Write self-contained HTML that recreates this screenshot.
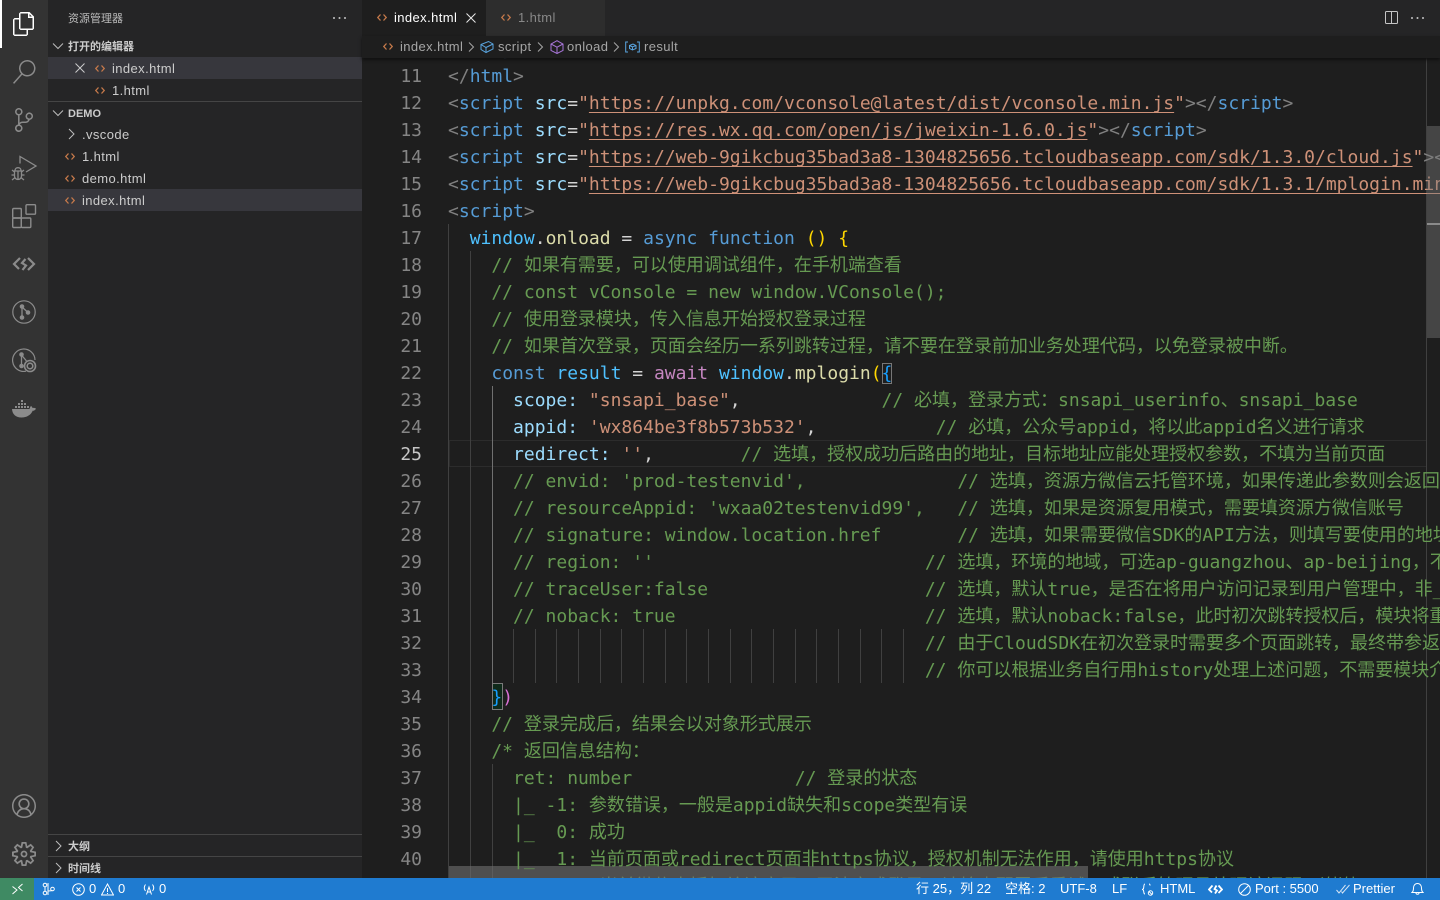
<!DOCTYPE html>
<html lang="zh-CN"><head><meta charset="utf-8"><title>index.html - demo</title>
<style>
*{box-sizing:border-box}
html,body{margin:0;padding:0;width:1440px;height:900px;overflow:hidden;background:#1e1e1e}
body{position:relative;font-family:"Liberation Sans","Noto Sans CJK SC",sans-serif;color:#ccc}
.a{position:absolute}
#act{left:0;top:0;width:48px;height:878px;background:#333}
#act svg{position:absolute;fill:#8b8b8b}
#side{left:48px;top:0;width:314px;height:878px;background:#252526}
.row{position:absolute;left:0;width:314px;height:22px;line-height:22px;font-size:13px;color:#ccc;white-space:pre;letter-spacing:.4px}
.row.sel{background:#37373d}
.row span{position:absolute;top:1px}
.hd{position:absolute;font-size:11px;font-weight:700;color:#ccc;line-height:22px;height:22px;white-space:pre}
.div{position:absolute;left:0;width:314px;height:1px;background:#454545}
.ic{position:absolute;fill:none;stroke:#c5794a;stroke-width:1.300}
.chev{position:absolute;fill:none;stroke:#bcbcbc;stroke-width:1}
#tabs{left:362px;top:0;width:1078px;height:36px;background:#252526}
#crumb{left:362px;top:36px;width:1078px;height:22px;background:#1e1e1e;box-shadow:0 2px 3px #101010;z-index:5;font-size:13px;line-height:22px;color:#a6a6a6;letter-spacing:.4px}
#crumb span{position:absolute;top:0;white-space:pre}
#ed{left:362px;top:58px;width:1078px;height:820px;overflow:hidden;background:#1e1e1e}
.ln{position:absolute;left:0;width:60px;text-align:right;font:18px/27px "DejaVu Sans Mono",monospace;color:#858585;margin-top:1px}
.c{position:absolute;left:86px;white-space:pre;font:18px/27px "DejaVu Sans Mono","Noto Sans CJK SC",monospace;color:#d4d4d4;height:27px;width:1200px;margin-top:1px}
.g{color:#808080}.t{color:#569cd6}.at{color:#9cdcfe}.s{color:#ce9178}.u{color:#ce9178;text-decoration:underline;text-decoration-thickness:1px;text-underline-offset:3px;text-decoration-skip-ink:none}
.k{color:#569cd6}.f{color:#dcdcaa}.v{color:#4fc1ff}.p{color:#9cdcfe}.cm{color:#669a52}.aw{color:#c586c0}.y{color:#ffd700}
.ig{position:absolute;width:1px;background:#404040}
#st{left:0;top:878px;width:1440px;height:22px;background:#1f7bd0;font-size:13px;line-height:22px;color:#fff;z-index:6}
#st span{position:absolute;top:0;white-space:pre}
#st svg{position:absolute;fill:none;stroke:#fff;stroke-width:1}
</style></head><body>

<div class="a" id="act">
<div class="a" style="left:0;top:0;width:2px;height:48px;background:#fff"></div>
<svg style="left:12px;top:12px;fill:#fff" width="24" height="24" viewBox="0 0 24 24"><path d="M17.5 0h-9L7 1.5V6H2.5L1 7.5v15.07L2.5 24h12.07L16 22.57V18h4.7l1.3-1.43V4.5L17.5 0zm0 2.12l2.38 2.38H17.5V2.12zm-3 20.38h-12v-15H7v9.07L8.5 18h6v4.5zm6-6h-12v-15H16V6h4.5v10.5z"/></svg>
<svg style="left:12px;top:60px" width="24" height="24" viewBox="0 0 24 24"><path d="M15.25 0a8.25 8.25 0 0 0-6.18 13.72L1 22.88l1.12 1 8.05-9.12A8.251 8.251 0 1 0 15.25.01V0zm0 15a6.75 6.75 0 1 1 0-13.5 6.75 6.75 0 0 1 0 13.5z"/></svg>
<svg style="left:12px;top:108px" width="24" height="24" viewBox="0 0 24 24"><path d="M21.007 8.222A3.738 3.738 0 0 0 15.045 5.2a3.737 3.737 0 0 0 1.156 6.583 2.988 2.988 0 0 1-2.668 1.67h-2.99a4.456 4.456 0 0 0-2.989 1.165V7.4a3.737 3.737 0 1 0-1.494 0v9.117a3.776 3.776 0 1 0 1.816.099 2.99 2.99 0 0 1 2.668-1.667h2.99a4.484 4.484 0 0 0 4.223-3.039 3.736 3.736 0 0 0 3.25-3.687zM4.565 3.738a2.242 2.242 0 1 1 4.484 0 2.242 2.242 0 0 1-4.484 0zm4.484 16.441a2.242 2.242 0 1 1-4.484 0 2.242 2.242 0 0 1 4.484 0zm8.221-9.715a2.242 2.242 0 1 1 0-4.485 2.242 2.242 0 0 1 0 4.485z"/></svg>
<svg style="left:10px;top:155px;fill:none;stroke:#8b8b8b;stroke-width:1.300" width="28" height="28" viewBox="0 0 28 28"><path d="M10 8.500V1.500l16 9.500-10 6"/><path d="M5 15.500c0-1.600 1.200-2.800 3-2.800s3 1.200 3 2.800M4.500 16h7v5c0 2-1.500 3.500-3.500 3.500S4.500 23 4.500 21zM8 16v8.500M2 15l2.500 2M14 15l-2.500 2M1.500 20h3M11.500 20h3M2 25l2.800-2.200M14 25l-2.800-2.200"/></svg>
<svg style="left:12px;top:204px;fill:none;stroke:#8b8b8b;stroke-width:1.400" width="26" height="26" viewBox="0 0 26 26"><rect x=".7" y="4.500" width="8.600" height="9.500" rx="1"/><rect x=".7" y="14" width="8.600" height="9.500" rx="1"/><rect x="9.300" y="14" width="9.500" height="9.500" rx="1"/><rect x="14" y=".7" width="9.500" height="9.500" rx="1"/></svg>
<svg style="left:12px;top:255px;fill:none;stroke:#8b8b8b;stroke-width:2.200" width="24" height="18" viewBox="0 0 24 18"><path d="M8 3 2 9l5 5M16 3l6 6-6 6M13.500 4l-3.500 4 4 2.500-3.500 4.500"/></svg>
<svg style="left:12px;top:300px;fill:none;stroke:#8b8b8b;stroke-width:1.200" width="24" height="24" viewBox="0 0 24 24"><circle cx="12" cy="12" r="11.200"/><path d="M10 7v10M10 7l6 5.500" stroke-width="1.300"/><circle cx="10" cy="6.500" r="1.700" fill="#8b8b8b"/><circle cx="10" cy="17.500" r="1.700" fill="#8b8b8b"/><circle cx="16" cy="12.500" r="1.700" fill="#8b8b8b"/></svg>
<svg style="left:12px;top:348px;fill:none;stroke:#8b8b8b;stroke-width:1.200" width="26" height="26" viewBox="0 0 26 26"><path d="M14 23.200A11.200 11.200 0 1 1 23 12"/><path d="M9.500 7v11M9.500 7l5 6" stroke-width="1.300"/><circle cx="9.500" cy="6.500" r="1.700" fill="#8b8b8b"/><circle cx="9.500" cy="18" r="1.700" fill="#8b8b8b"/><circle cx="18" cy="18" r="5.500" fill="#333" stroke-width="1.600"/><circle cx="18" cy="18" r="2.800" fill="none" stroke-width="1.600"/></svg>
<svg style="left:12px;top:400px" width="24" height="18" viewBox="0 0 24 18"><path d="M9 0h2v2H9zM6 3h2v2H6zM9 3h2v2H9zM12 3h2v2h-2zM3 6h2v2H3zM6 6h2v2H6zM9 6h2v2H9zM12 6h2v2h-2zM15 6h2v2h-2z"/><path d="M0 9h17.500c.5-1.500.8-2.500 1.500-3 .8.500 1.300 1.200 1.500 2 1-.3 2-.2 3.500.6-.7 1.500-2 2.200-3.300 2.200C18.800 15 15 17.500 9.500 17.500 3.500 17.500.3 14 0 9z"/></svg>
<svg style="left:12px;top:794px" width="24" height="24" viewBox="0 0 16 16"><path d="M16 7.992C16 3.58 12.416 0 8 0S0 3.58 0 7.992c0 2.43 1.104 4.62 2.832 6.09.016.016.032.016.032.032.144.112.288.224.448.336.08.048.144.111.224.175A7.98 7.98 0 0 0 8.016 16a7.98 7.98 0 0 0 4.48-1.375c.08-.048.144-.111.224-.16.144-.111.304-.223.448-.335.016-.016.032-.016.032-.032 1.696-1.487 2.8-3.676 2.8-6.106zm-8 7.001c-1.504 0-2.88-.48-4.016-1.279.016-.128.048-.255.08-.383a4.17 4.17 0 0 1 .416-.991c.176-.304.384-.576.64-.816.24-.24.528-.463.816-.639.304-.176.624-.304.976-.4A4.15 4.15 0 0 1 8 10.342a4.185 4.185 0 0 1 2.928 1.166c.368.368.656.8.864 1.295.112.288.192.592.24.911A7.03 7.03 0 0 1 8 14.993zm-2.448-7.4a2.49 2.49 0 0 1-.208-1.024c0-.351.064-.703.208-1.023.144-.32.336-.607.576-.847.24-.24.528-.431.848-.575.32-.144.672-.208 1.024-.208.368 0 .704.064 1.024.208.32.144.608.336.848.575.24.24.432.528.576.847.144.32.208.672.208 1.023 0 .368-.064.704-.208 1.023a2.84 2.84 0 0 1-.576.848 2.84 2.84 0 0 1-.848.575 2.715 2.715 0 0 1-2.064 0 2.84 2.84 0 0 1-.848-.575 2.526 2.526 0 0 1-.56-.848zm7.424 5.306c0-.032-.016-.048-.016-.08a5.22 5.22 0 0 0-.688-1.406 4.883 4.883 0 0 0-1.088-1.135 5.207 5.207 0 0 0-1.04-.608 2.82 2.82 0 0 0 .464-.383 4.2 4.2 0 0 0 .624-.784 3.624 3.624 0 0 0 .528-1.934 3.71 3.71 0 0 0-.288-1.47 3.799 3.799 0 0 0-.816-1.199 3.845 3.845 0 0 0-1.2-.8 3.72 3.72 0 0 0-1.472-.287 3.72 3.72 0 0 0-1.472.288 3.631 3.631 0 0 0-1.2.815 3.84 3.84 0 0 0-.8 1.199 3.71 3.71 0 0 0-.288 1.47c0 .352.048.688.144 1.007.096.336.224.64.4.927.16.288.384.544.624.784.144.144.304.271.48.383a5.12 5.12 0 0 0-1.04.624c-.416.32-.784.703-1.088 1.119a4.999 4.999 0 0 0-.688 1.406c-.016.032-.016.064-.016.08C1.776 11.636.992 9.91.992 7.992.992 4.14 4.144.991 8 .991s7.008 3.149 7.008 7.001a6.96 6.96 0 0 1-2.032 4.907z"/></svg>
<svg style="left:12px;top:842px" width="24" height="24" viewBox="0 0 24 24"><path d="M19.85 8.75l4.15.83v4.84l-4.15.83 2.35 3.52-3.43 3.43-3.52-2.35-.83 4.15H9.58l-.83-4.15-3.52 2.35-3.43-3.43 2.35-3.52L0 14.42V9.58l4.15-.83L1.8 5.23 5.23 1.8l3.52 2.35L9.58 0h4.84l.83 4.15 3.52-2.35 3.43 3.43-2.35 3.52zm-1.57 5.07l4-.81v-2l-4-.81-.54-1.3 2.29-3.43-1.43-1.43-3.43 2.29-1.3-.54-.81-4h-2l-.81 4-1.3.54-3.43-2.29-1.43 1.43L6.38 8.9l-.54 1.3-4 .81v2l4 .81.54 1.3-2.29 3.43 1.43 1.43 3.43-2.29 1.3.54.81 4h2l.81-4 1.3-.54 3.43 2.29 1.43-1.43-2.29-3.43.54-1.3zm-8.186-4.672A3.43 3.43 0 0 1 12 8.57 3.44 3.44 0 0 1 15.43 12a3.43 3.43 0 1 1-5.336-2.852zm.956 4.274c.281.188.612.288.95.288A1.7 1.7 0 0 0 13.71 12a1.71 1.71 0 1 0-2.66 1.422z"/></svg>
</div>

<div class="a" id="side">
<div class="hd" style="left:20px;top:8px;font-weight:400;color:#bbb">资源管理器</div>
<svg class="a" style="left:285px;top:17px;fill:#c5c5c5" width="14" height="3"><circle cx="1" cy="1" r="1"/><circle cx="6.500" cy="1" r="1"/><circle cx="12" cy="1" r="1"/></svg>
<svg class="chev" style="left:4px;top:41px" width="12" height="10"><path d="M1 2.500 6 7.500l5-5"/></svg>
<div class="hd" style="left:20px;top:36px">打开的编辑器</div>
<div class="row sel" style="top:57px"><span style="left:64px">index.html</span></div>
<svg class="ic" style="left:47px;top:65px" width="10" height="7" viewBox="0 0 10 7"><path d="M3.500.500.800 3.500l2.700 3M6.500.500l2.700 3-2.700 3"/></svg>
<svg class="a" style="left:27px;top:63px;fill:none;stroke:#ccc;stroke-width:1" width="10" height="10"><path d="M.5.500l9 9M9.500.500l-9 9"/></svg>
<div class="row" style="top:79px"><span style="left:64px">1.html</span></div>
<svg class="ic" style="left:47px;top:87px" width="10" height="7" viewBox="0 0 10 7"><path d="M3.500.500.800 3.500l2.700 3M6.500.500l2.700 3-2.700 3"/></svg>
<div class="div" style="top:101px"></div>
<svg class="chev" style="left:4px;top:108px" width="12" height="10"><path d="M1 2.500 6 7.500l5-5"/></svg>
<div class="hd" style="left:20px;top:103px">DEMO</div>
<svg class="chev" style="left:19px;top:128px" width="10" height="12"><path d="M2 1l5 5-5 5"/></svg>
<div class="row" style="top:123px"><span style="left:34px">.vscode</span></div>
<div class="row" style="top:145px"><span style="left:34px">1.html</span></div>
<svg class="ic" style="left:17px;top:153px" width="10" height="7" viewBox="0 0 10 7"><path d="M3.500.500.800 3.500l2.700 3M6.500.500l2.700 3-2.700 3"/></svg>
<div class="row" style="top:167px"><span style="left:34px">demo.html</span></div>
<svg class="ic" style="left:17px;top:175px" width="10" height="7" viewBox="0 0 10 7"><path d="M3.500.500.800 3.500l2.700 3M6.500.500l2.700 3-2.700 3"/></svg>
<div class="row sel" style="top:189px"><span style="left:34px">index.html</span></div>
<svg class="ic" style="left:17px;top:197px" width="10" height="7" viewBox="0 0 10 7"><path d="M3.500.500.800 3.500l2.700 3M6.500.500l2.700 3-2.700 3"/></svg>
<div class="div" style="top:834px"></div>
<svg class="chev" style="left:6px;top:840px" width="10" height="12"><path d="M2 1l5 5-5 5"/></svg>
<div class="hd" style="left:20px;top:836px">大纲</div>
<div class="div" style="top:856px"></div>
<svg class="chev" style="left:6px;top:862px" width="10" height="12"><path d="M2 1l5 5-5 5"/></svg>
<div class="hd" style="left:20px;top:858px">时间线</div>
</div>

<div class="a" id="tabs">
<div class="a" style="left:0;top:0;width:124px;height:36px;background:#1e1e1e;color:#fff;font-size:13px;line-height:35px;letter-spacing:.4px"><svg class="ic" style="left:15px;top:14px" width="10" height="7" viewBox="0 0 10 7"><path d="M3.500.500.800 3.500l2.700 3M6.500.500l2.700 3-2.700 3"/></svg><span class="a" style="left:32px">index.html</span>
<svg class="a" style="left:104px;top:13px;fill:none;stroke:#e8e8e8;stroke-width:1" width="10" height="10"><path d="M.5.500l9 9M9.500.500l-9 9"/></svg></div>
<div class="a" style="left:124px;top:0;width:119px;height:36px;background:#2d2d2d;color:#888;font-size:13px;line-height:35px;letter-spacing:.4px"><svg class="ic" style="left:15px;top:14px" width="10" height="7" viewBox="0 0 10 7"><path d="M3.500.500.800 3.500l2.700 3M6.500.500l2.700 3-2.700 3"/></svg><span class="a" style="left:32px">1.html</span></div>
<svg class="a" style="left:1023px;top:11px;fill:none;stroke:#c5c5c5;stroke-width:1" width="13" height="13"><rect x=".5" y=".5" width="12" height="12" rx="1"/><path d="M6.500.500v12"/></svg>
<svg class="a" style="left:1049px;top:17px;fill:#c5c5c5" width="13" height="3"><circle cx="1" cy="1" r="1"/><circle cx="6.500" cy="1" r="1"/><circle cx="12" cy="1" r="1"/></svg>
</div>

<div class="a" id="crumb">
<svg class="ic" style="left:21px;top:7px" width="10" height="7" viewBox="0 0 10 7"><path d="M3.500.500.800 3.500l2.700 3M6.500.500l2.700 3-2.700 3"/></svg><span style="left:38px">index.html</span>
<svg class="chev" style="left:105px;top:5px;stroke:#a6a6a6" width="10" height="12"><path d="M2 1.500l4.500 4.500L2 10.500"/></svg>
<svg class="a" style="left:118px;top:4px;fill:none;stroke:#5aa5e0;stroke-width:1" width="14" height="14"><path d="M1 4.500 8.500 1.500l4.500 2.500v5L6 12.500 1 9.500zM1 4.500l5 3 7-3.500M6 7.500v5"/></svg>
<span style="left:136px">script</span>
<svg class="chev" style="left:174px;top:5px;stroke:#a6a6a6" width="10" height="12"><path d="M2 1.500l4.500 4.500L2 10.500"/></svg>
<svg class="a" style="left:188px;top:4px;fill:none;stroke:#a775d8;stroke-width:1" width="14" height="14"><path d="M7 .7 13 4v6.500L7 13.500 1 10.500V4zM1 4l6 3.200L13 4M7 7.200v6.300"/></svg>
<span style="left:205px">onload</span>
<svg class="chev" style="left:250px;top:5px;stroke:#a6a6a6" width="10" height="12"><path d="M2 1.500l4.500 4.500L2 10.500"/></svg>
<svg class="a" style="left:263px;top:5px;fill:none;stroke:#5aa5e0;stroke-width:1" width="15" height="12"><path d="M3 1H.7v10H3M12 1h2.300v10H12M4.500 4.500 8 3l3 1.500v3L7.500 9l-3-1.500zM4.500 4.500 7.500 6 11 4.500M7.500 6v3"/></svg>
<span style="left:282px">result</span>
</div>

<div class="a" id="ed">
<div class="a" style="left:87px;top:382px;width:978px;height:27px;border:1px solid #2c2c2c"></div>
<div class="a" style="left:1064px;top:0;width:1px;height:820px;background:#404040"></div>
<div class="ig" style="left:86px;top:166px;height:654px"></div>
<div class="ig" style="left:108px;top:193px;height:627px"></div>
<div class="ig" style="left:130px;top:328px;height:297px;background:#707070"></div>
<div class="ig" style="left:130px;top:706px;height:114px"></div>
<div class="ig" style="left:151px;top:571px;height:54px"></div><div class="ig" style="left:173px;top:571px;height:54px"></div><div class="ig" style="left:194px;top:571px;height:54px"></div><div class="ig" style="left:216px;top:571px;height:54px"></div><div class="ig" style="left:238px;top:571px;height:54px"></div><div class="ig" style="left:259px;top:571px;height:54px"></div><div class="ig" style="left:281px;top:571px;height:54px"></div><div class="ig" style="left:303px;top:571px;height:54px"></div><div class="ig" style="left:324px;top:571px;height:54px"></div><div class="ig" style="left:346px;top:571px;height:54px"></div><div class="ig" style="left:368px;top:571px;height:54px"></div><div class="ig" style="left:389px;top:571px;height:54px"></div><div class="ig" style="left:411px;top:571px;height:54px"></div><div class="ig" style="left:433px;top:571px;height:54px"></div><div class="ig" style="left:454px;top:571px;height:54px"></div><div class="ig" style="left:476px;top:571px;height:54px"></div><div class="ig" style="left:498px;top:571px;height:54px"></div><div class="ig" style="left:519px;top:571px;height:54px"></div><div class="ig" style="left:541px;top:571px;height:54px"></div>
<div class="a" style="left:130px;top:625px;width:11px;height:27px;border:1px solid #7a7a7a;background:#0f2a1a"></div>

<div class="ln" style="top:-23px">10</div><div class="c" style="top:-23px"><span class="g">&lt;/</span><span class="t">body</span><span class="g">&gt;</span></div>
<div class="ln" style="top:4px">11</div><div class="c" style="top:4px"><span class="g">&lt;/</span><span class="t">html</span><span class="g">&gt;</span></div>
<div class="ln" style="top:31px">12</div><div class="c" style="top:31px"><span class="g">&lt;</span><span class="t">script</span> <span class="at">src</span>=<span class="s">"</span><span class="u">https://unpkg.com/vconsole@latest/dist/vconsole.min.js</span><span class="s">"</span><span class="g">&gt;&lt;/</span><span class="t">script</span><span class="g">&gt;</span></div>
<div class="ln" style="top:58px">13</div><div class="c" style="top:58px"><span class="g">&lt;</span><span class="t">script</span> <span class="at">src</span>=<span class="s">"</span><span class="u">https://res.wx.qq.com/open/js/jweixin-1.6.0.js</span><span class="s">"</span><span class="g">&gt;&lt;/</span><span class="t">script</span><span class="g">&gt;</span></div>
<div class="ln" style="top:85px">14</div><div class="c" style="top:85px"><span class="g">&lt;</span><span class="t">script</span> <span class="at">src</span>=<span class="s">"</span><span class="u">https://web-9gikcbug35bad3a8-1304825656.tcloudbaseapp.com/sdk/1.3.0/cloud.js</span><span class="s">"</span><span class="g">&gt;&lt;/</span><span class="t">script</span><span class="g">&gt;</span></div>
<div class="ln" style="top:112px">15</div><div class="c" style="top:112px"><span class="g">&lt;</span><span class="t">script</span> <span class="at">src</span>=<span class="s">"</span><span class="u">https://web-9gikcbug35bad3a8-1304825656.tcloudbaseapp.com/sdk/1.3.1/mplogin.min.js</span><span class="s">"</span><span class="g">&gt;&lt;/</span><span class="t">script</span><span class="g">&gt;</span></div>
<div class="ln" style="top:139px">16</div><div class="c" style="top:139px"><span class="g">&lt;</span><span class="t">script</span><span class="g">&gt;</span></div>
<div class="ln" style="top:166px">17</div><div class="c" style="top:166px">  <span class="v">window</span>.<span class="f">onload</span> = <span class="k">async</span> <span class="k">function</span> <span class="y">()</span> <span class="y">{</span></div>
<div class="ln" style="top:193px">18</div><div class="c cm" style="top:193px">    // 如果有需要，可以使用调试组件，在手机端查看</div>
<div class="ln" style="top:220px">19</div><div class="c cm" style="top:220px">    // const vConsole = new window.VConsole();</div>
<div class="ln" style="top:247px">20</div><div class="c cm" style="top:247px">    // 使用登录模块，传入信息开始授权登录过程</div>
<div class="ln" style="top:274px">21</div><div class="c cm" style="top:274px">    // 如果首次登录，页面会经历一系列跳转过程，请不要在登录前加业务处理代码，以免登录被中断。</div>
<div class="ln" style="top:301px">22</div><div class="c" style="top:301px">    <span class="k">const</span> <span class="v">result</span> = <span class="aw">await</span> <span class="v">window</span>.<span class="f">mplogin</span><span class="y">(</span><span style="color:#179fff;outline:1px solid #777;outline-offset:-1px">{</span></div>
<div class="ln" style="top:328px">23</div><div class="c" style="top:328px">      <span class="p">scope</span><span class="p">:</span> <span class="s">"snsapi_base"</span>,             <span class="cm">// 必填，登录方式：snsapi_userinfo、snsapi_base</span></div>
<div class="ln" style="top:355px">24</div><div class="c" style="top:355px">      <span class="p">appid</span><span class="p">:</span> <span class="s">'wx864be3f8b573b532'</span>,           <span class="cm">// 必填，公众号appid，将以此appid名义进行请求</span></div>
<div class="ln" style="top:382px;color:#c6c6c6">25</div><div class="c" style="top:382px">      <span class="p">redirect</span><span class="p">:</span> <span class="s">''</span>,        <span class="cm">// 选填，授权成功后路由的地址，目标地址应能处理授权参数，不填为当前页面</span></div>
<div class="ln" style="top:409px">26</div><div class="c cm" style="top:409px">      // envid: 'prod-testenvid',              // 选填，资源方微信云托管环境，如果传递此参数则会返回</div>
<div class="ln" style="top:436px">27</div><div class="c cm" style="top:436px">      // resourceAppid: 'wxaa02testenvid99',   // 选填，如果是资源复用模式，需要填资源方微信账号</div>
<div class="ln" style="top:463px">28</div><div class="c cm" style="top:463px">      // signature: window.location.href       // 选填，如果需要微信SDK的API方法，则填写要使用的地址</div>
<div class="ln" style="top:490px">29</div><div class="c cm" style="top:490px">      // region: ''                         // 选填，环境的地域，可选ap-guangzhou、ap-beijing，不填</div>
<div class="ln" style="top:517px">30</div><div class="c cm" style="top:517px">      // traceUser:false                    // 选填，默认true，是否在将用户访问记录到用户管理中，非_</div>
<div class="ln" style="top:544px">31</div><div class="c cm" style="top:544px">      // noback: true                       // 选填，默认noback:false，此时初次跳转授权后，模块将重</div>
<div class="ln" style="top:571px">32</div><div class="c cm" style="top:571px">                                            // 由于CloudSDK在初次登录时需要多个页面跳转，最终带参返回</div>
<div class="ln" style="top:598px">33</div><div class="c cm" style="top:598px">                                            // 你可以根据业务自行用history处理上述问题，不需要模块介入</div>
<div class="ln" style="top:625px">34</div><div class="c" style="top:625px">    <span style="color:#179fff">}</span><span style="color:#da70d6">)</span></div>
<div class="ln" style="top:652px">35</div><div class="c cm" style="top:652px">    // 登录完成后，结果会以对象形式展示</div>
<div class="ln" style="top:679px">36</div><div class="c cm" style="top:679px">    /* 返回信息结构：</div>
<div class="ln" style="top:706px">37</div><div class="c cm" style="top:706px">      ret: number               // 登录的状态</div>
<div class="ln" style="top:733px">38</div><div class="c cm" style="top:733px">      |_ -1: 参数错误，一般是appid缺失和scope类型有误</div>
<div class="ln" style="top:760px">39</div><div class="c cm" style="top:760px">      |_  0: 成功</div>
<div class="c cm" style="top:814px">              当前微信未授权给该应用，无法完成登录，请检查配置后重试，或联系管理员处理该问题，谢谢</div>

<div class="a" style="left:1065px;top:68px;width:13px;height:212px;background:rgba(121,121,121,.43)"></div>
<div class="a" style="left:1065px;top:165px;width:13px;height:2px;background:#8a8a8a"></div>
<div class="a" style="left:87px;top:808px;width:639px;height:12px;background:rgba(110,110,110,.62)"></div>
<div class="ln" style="top:787px">40</div><div class="c cm" style="top:787px">      |_  1: 当前页面或redirect页面非https协议，授权机制无法作用，请使用https协议</div>
</div>

<div class="a" id="st">
<div class="a" style="left:0;top:0;width:34px;height:22px;background:#3f8a63"></div>
<svg style="left:11px;top:5px" width="13" height="12" viewBox="0 0 13 12"><path d="M1.500 11 6 7 1.500 3.500M11.500 1 7.500 4.500 11.500 8"/></svg>
<svg style="left:42px;top:4px" width="13" height="14" viewBox="0 0 13 14"><circle cx="3" cy="3" r="1.800"/><circle cx="3" cy="11" r="1.800"/><circle cx="10.500" cy="7" r="1.800"/><path d="M3 4.800v4.400M6 1v12M6 9c3 0 4-.5 4.500-.5"/></svg>
<svg style="left:72px;top:5px" width="13" height="13" viewBox="0 0 13 13"><circle cx="6.500" cy="6.500" r="5.800"/><path d="M4.500 4.500l4 4M8.500 4.500l-4 4"/></svg><span style="left:89px">0</span>
<svg style="left:101px;top:5px" width="13" height="13" viewBox="0 0 13 13"><path d="M6.500 1 12.500 12H.5zM6.500 5v4M6.500 10v1"/></svg><span style="left:118px">0</span>
<svg style="left:143px;top:5px" width="12" height="13" viewBox="0 0 12 13"><path d="M3.500 11.500 6 4l2.500 7.500M4.500 9h3M2.500 1.500C1 3.500 1 6 2.500 8M9.500 1.500c1.500 2 1.500 4.500 0 6.500"/></svg><span style="left:159px">0</span>
<span style="left:916px">行 25，列 22</span>
<span style="left:1005px">空格: 2</span>
<span style="left:1060px">UTF-8</span>
<span style="left:1112px">LF</span>
<svg style="left:1141px;top:5px" width="14" height="14" viewBox="0 0 14 14"><path d="M4 1C2.500 1 3 4 2.500 5.500 2.200 6.200 1.500 6.500 1 6.500c.5 0 1.200.3 1.500 1C3 9 2.500 11 4 11M8 1c.8 0 1 .5 1.200 1.500"/><circle cx="9.500" cy="10" r="2.200"/><path d="M8 8.500l3 3"/></svg>
<span style="left:1160px">HTML</span>
<svg style="left:1208px;top:6px;stroke-width:1.800" width="15" height="11" viewBox="0 0 15 11"><path d="M4.500 1.500 1 5.500l3 3M10.500 1.500l3.500 4-3.500 3.500M8.500 1.500 6.500 5l2.500 1.500-2 3"/></svg>
<svg style="left:1238px;top:5px" width="13" height="13" viewBox="0 0 13 13"><circle cx="6.500" cy="6.500" r="5.800"/><path d="M2.500 10.500l8-8"/></svg>
<span style="left:1255px">Port : 5500</span>
<svg style="left:1336px;top:6px;stroke:#d8e6f5" width="14" height="11" viewBox="0 0 14 11"><path d="M.5 6l2.500 3L9.500 1M5.500 7.500 6.500 9 13.500 1"/></svg>
<span style="left:1353px">Prettier</span>
<svg style="left:1411px;top:4px" width="13" height="14" viewBox="0 0 13 14"><path d="M1 10.500h11c-1.200-1-1.500-2-1.500-4.500 0-2.500-1.500-4.500-4-4.500S2.500 3.500 2.500 6c0 2.500-.3 3.500-1.500 4.500zM5 11c0 1.600 3 1.600 3 0"/></svg>
</div>
</body></html>
